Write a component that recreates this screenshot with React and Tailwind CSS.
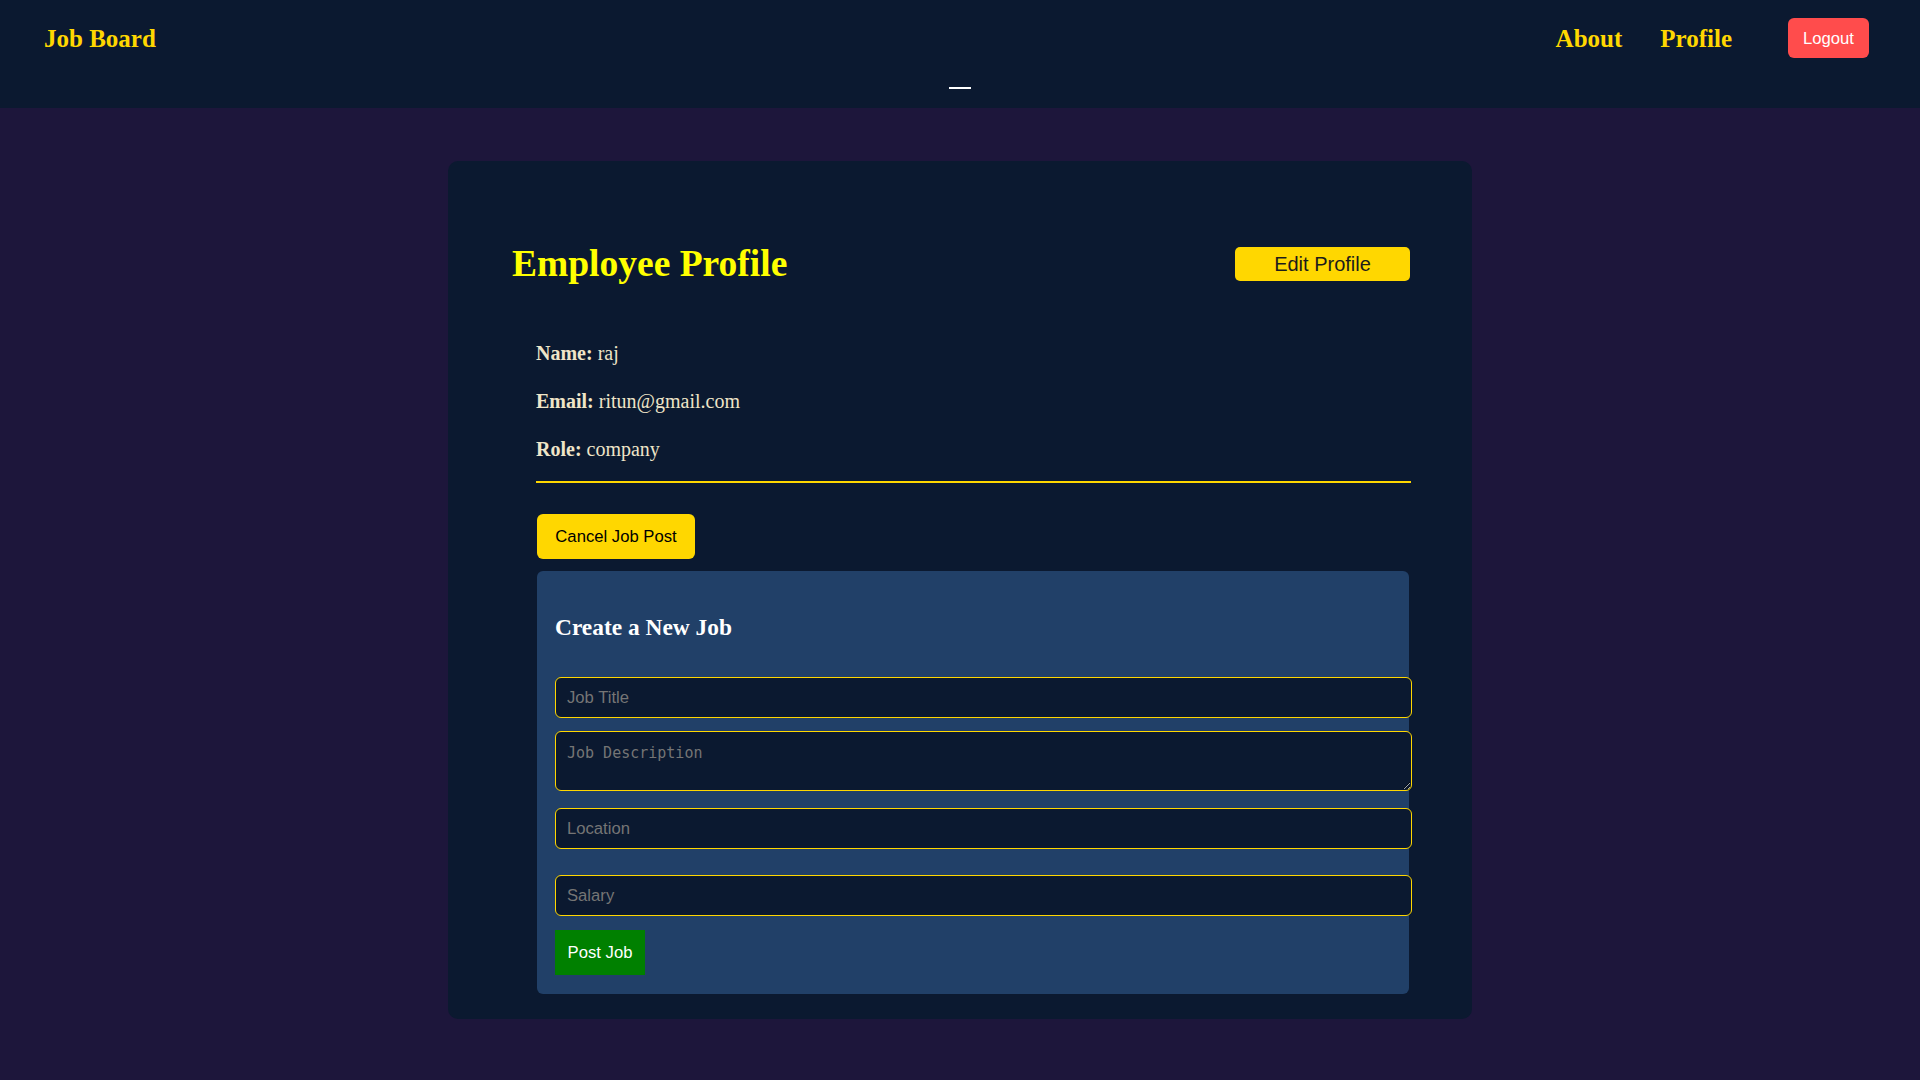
import React from "react";

export default function App() {
  return (
    <div className="min-h-screen bg-[#1d163b] font-['Liberation_Sans',Arial,sans-serif]">
      <nav className="h-[108px] bg-[#0b1930]">
        <div className="flex h-[58px] items-center justify-between pl-[44px] pr-[51px] pt-[18px]">
          <span className="font-['Liberation_Serif',serif] text-[25px] font-bold leading-[29px] text-[#ffd700]">
            Job Board
          </span>
          <div className="flex items-center">
            <a className="font-['Liberation_Serif',serif] text-[25px] font-bold leading-[29px] text-[#ffd700]">
              About
            </a>
            <a className="ml-[38px] font-['Liberation_Serif',serif] text-[25px] font-bold leading-[29px] text-[#ffd700]">
              Profile
            </a>
            <button className="ml-[56px] h-[40px] w-[81px] rounded-[6px] bg-[#ff4c4c] text-[16.67px] leading-[19px] text-white">
              Logout
            </button>
          </div>
        </div>
        <div className="mt-[29px] flex justify-center">
          <div className="h-[2px] w-[22px] bg-white" />
        </div>
      </nav>

      <main className="flex justify-center pt-[53px] pb-[61px]">
        <div className="w-[1024px] rounded-[10px] bg-[#0b1930] pt-[78px] pl-[64px] pr-[62px] pb-[25px]">
          <div className="flex items-start justify-between">
            <h1 className="pt-[3px] font-['Liberation_Serif',serif] text-[37.5px] font-bold leading-[43px] text-[#ffff00]">
              Employee Profile
            </h1>
            <button className="mt-[8px] h-[34px] w-[175px] rounded-[5px] bg-[#ffd700] text-[20px] text-[#1c1c1c]">
              Edit Profile
            </button>
          </div>

          <div className="pl-[24px]">
            <div className="mt-[57px] flex flex-col gap-[25px] font-['Liberation_Serif',serif] text-[20px] leading-[23px] text-[#efe5c8]">
              <p>
                <b>Name:</b> raj
              </p>
              <p>
                <b>Email:</b> ritun@gmail.com
              </p>
              <p>
                <b>Role:</b> company
              </p>
            </div>
            <div className="mt-[20px] h-[2px] w-[875px] bg-[#ffd700]" />

            <button className="mt-[31px] ml-[1px] h-[45px] w-[158px] rounded-[6px] bg-[#ffd700] text-[16.67px] text-black">
              Cancel Job Post
            </button>

            <div className="mt-[12px] ml-[1px] w-[872px] rounded-[6px] bg-[#214068] pt-[43px] pl-[18px] pb-[19px]">
              <h3 className="font-['Liberation_Serif',serif] text-[23.4px] font-bold leading-[27px] text-white">
                Create a New Job
              </h3>
              <input
                placeholder="Job Title"
                className="mt-[36px] block h-[41px] w-[857px] rounded-[6px] border border-[#ffd700] bg-[#0b1930] px-[11px] text-[16.67px] text-white outline-none placeholder:text-[#757575]"
              />
              <textarea
                placeholder="Job Description"
                className="mt-[13px] block h-[60px] w-[857px] rounded-[6px] border border-[#ffd700] bg-[#0b1930] px-[11px] pt-[11px] pb-[7px] font-['DejaVu_Sans_Mono',monospace] text-[15px] leading-[20px] text-white outline-none placeholder:text-[#757575]"
              />
              <input
                placeholder="Location"
                className="mt-[17px] block h-[41px] w-[857px] rounded-[6px] border border-[#ffd700] bg-[#0b1930] px-[11px] text-[16.67px] text-white outline-none placeholder:text-[#757575]"
              />
              <input
                placeholder="Salary"
                className="mt-[26px] block h-[41px] w-[857px] rounded-[6px] border border-[#ffd700] bg-[#0b1930] px-[11px] text-[16.67px] text-white outline-none placeholder:text-[#757575]"
              />
              <button className="mt-[14px] block h-[45px] w-[90px] bg-[#008000] text-[16.67px] text-white">
                Post Job
              </button>
            </div>
          </div>
        </div>
      </main>
    </div>
  );
}
